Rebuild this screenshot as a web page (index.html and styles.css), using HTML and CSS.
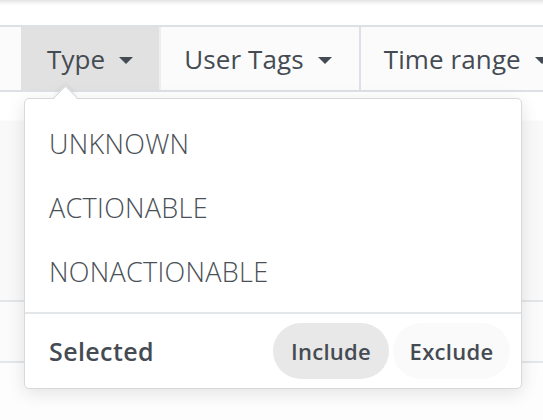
FILE: index.html
```html
<!DOCTYPE html>
<html>
<head>
<meta charset="utf-8">
<link rel="stylesheet" href="styles.css">
</head>
<body>
<div class="page">
  <div class="topbar"></div>
  <div class="toolbar">
    <div class="lead"></div>
    <div class="tab active">Type <span class="caret"></span></div>
    <div class="tab">User Tags <span class="caret"></span></div>
    <div class="tab">Time range <span class="caret"></span></div>
  </div>
  <div class="content">
    <div class="row r1"></div>
    <div class="row r2"></div>
    <div class="row r3"></div>
  </div>

  <div class="dropdown">
    <div class="pointer"></div>
    <ul class="menu">
      <li class="item">UNKNOWN</li>
      <li class="item">ACTIONABLE</li>
      <li class="item">NONACTIONABLE</li>
    </ul>
    <div class="footer">
      <span class="label">Selected</span>
      <div class="pills">
        <button class="pill on">Include</button>
        <button class="pill">Exclude</button>
      </div>
    </div>
  </div>
</div>
</body>
</html>
```
FILE: styles.css
```css
html, body {
  margin: 0;
  padding: 0;
  background: #ffffff;
}
.page {
  position: relative;
  width: 543px;
  height: 420px;
  overflow: hidden;
  font-family: "Open Sans", "Noto Sans", sans-serif;
  color: #454b52;
}
.topbar {
  height: 25px;
  background: linear-gradient(#e2e2e2 0px, #f6f6f6 3px, #ffffff 6px);
}
.toolbar {
  display: flex;
  height: 63px;
  border-top: 2px solid #dde1e6;
  border-bottom: 2px solid #dde1e6;
  background: #fbfbfc;
  white-space: nowrap;
}
.lead {
  width: 21px;
  flex: none;
}
.tab {
  flex: none;
  display: flex;
  align-items: center;
  gap: 14px;
  padding: 0 27px 0 23px;
  font-size: 26px;
  letter-spacing: 0.1px;
  border-right: 2px solid #dde1e6;
}
.tab.active {
  padding: 0 26px 0 26px;
  background: #e1e1e1;
  border-right-color: #eceef1;
}
.caret {
  width: 0;
  height: 0;
  border-left: 7px solid transparent;
  border-right: 7px solid transparent;
  border-top: 7px solid #454b52;
  margin-top: 3px;
}
.content {
  height: 328px;
  display: flex;
  flex-direction: column;
}
.row.r1 {
  height: 208px;
  background: linear-gradient(#ffffff 0, #ffffff 28px, #f9f9fa 29px);
  border-bottom: 2px solid #e4e7ea;
}
.row.r2 {
  height: 59px;
  border-bottom: 2px solid #e4e7ea;
  background: #fbfbfb;
}
.row.r3 {
  flex: 1;
  background: #fdfdfd;
}
.dropdown {
  position: absolute;
  left: 24px;
  top: 98px;
  width: 496px;
  height: 289px;
  background: #ffffff;
  border: 1px solid #d7dadd;
  border-radius: 5px;
  box-shadow: 0 4px 18px rgba(0, 0, 0, 0.11);
  display: flex;
  flex-direction: column;
}
.pointer {
  position: absolute;
  left: 32px;
  top: -10px;
  width: 16px;
  height: 16px;
  background: #ffffff;
  border-left: 1px solid #d7dadd;
  border-top: 1px solid #d7dadd;
  transform: rotate(45deg);
  box-shadow: -2px -2px 4px rgba(0, 0, 0, 0.05);
}
.menu {
  list-style: none;
  margin: 0;
  padding: 12px 0 9px;
  border-bottom: 2px solid #e4e7ea;
}
.item {
  height: 64px;
  display: flex;
  align-items: center;
  padding-left: 24px;
  font-size: 27px;
  font-weight: 300;
  letter-spacing: 0.3px;
  color: #4a5057;
}
.footer {
  flex: 1;
  display: flex;
  align-items: center;
  justify-content: space-between;
  padding: 0 11px 0 24px;
}
.label {
  font-size: 25px;
  font-weight: 600;
  letter-spacing: 0.4px;
}
.pills {
  display: flex;
  gap: 4px;
}
.pill {
  font-family: inherit;
  font-size: 22px;
  font-weight: 600;
  color: #454b52;
  border: none;
  height: 56px;
  width: 117px;
  border-radius: 28px;
  background: #fafafa;
  padding: 0;
  letter-spacing: 0.3px;
}
.pill.on {
  width: 116px;
  background: #e8e8e8;
}
```
